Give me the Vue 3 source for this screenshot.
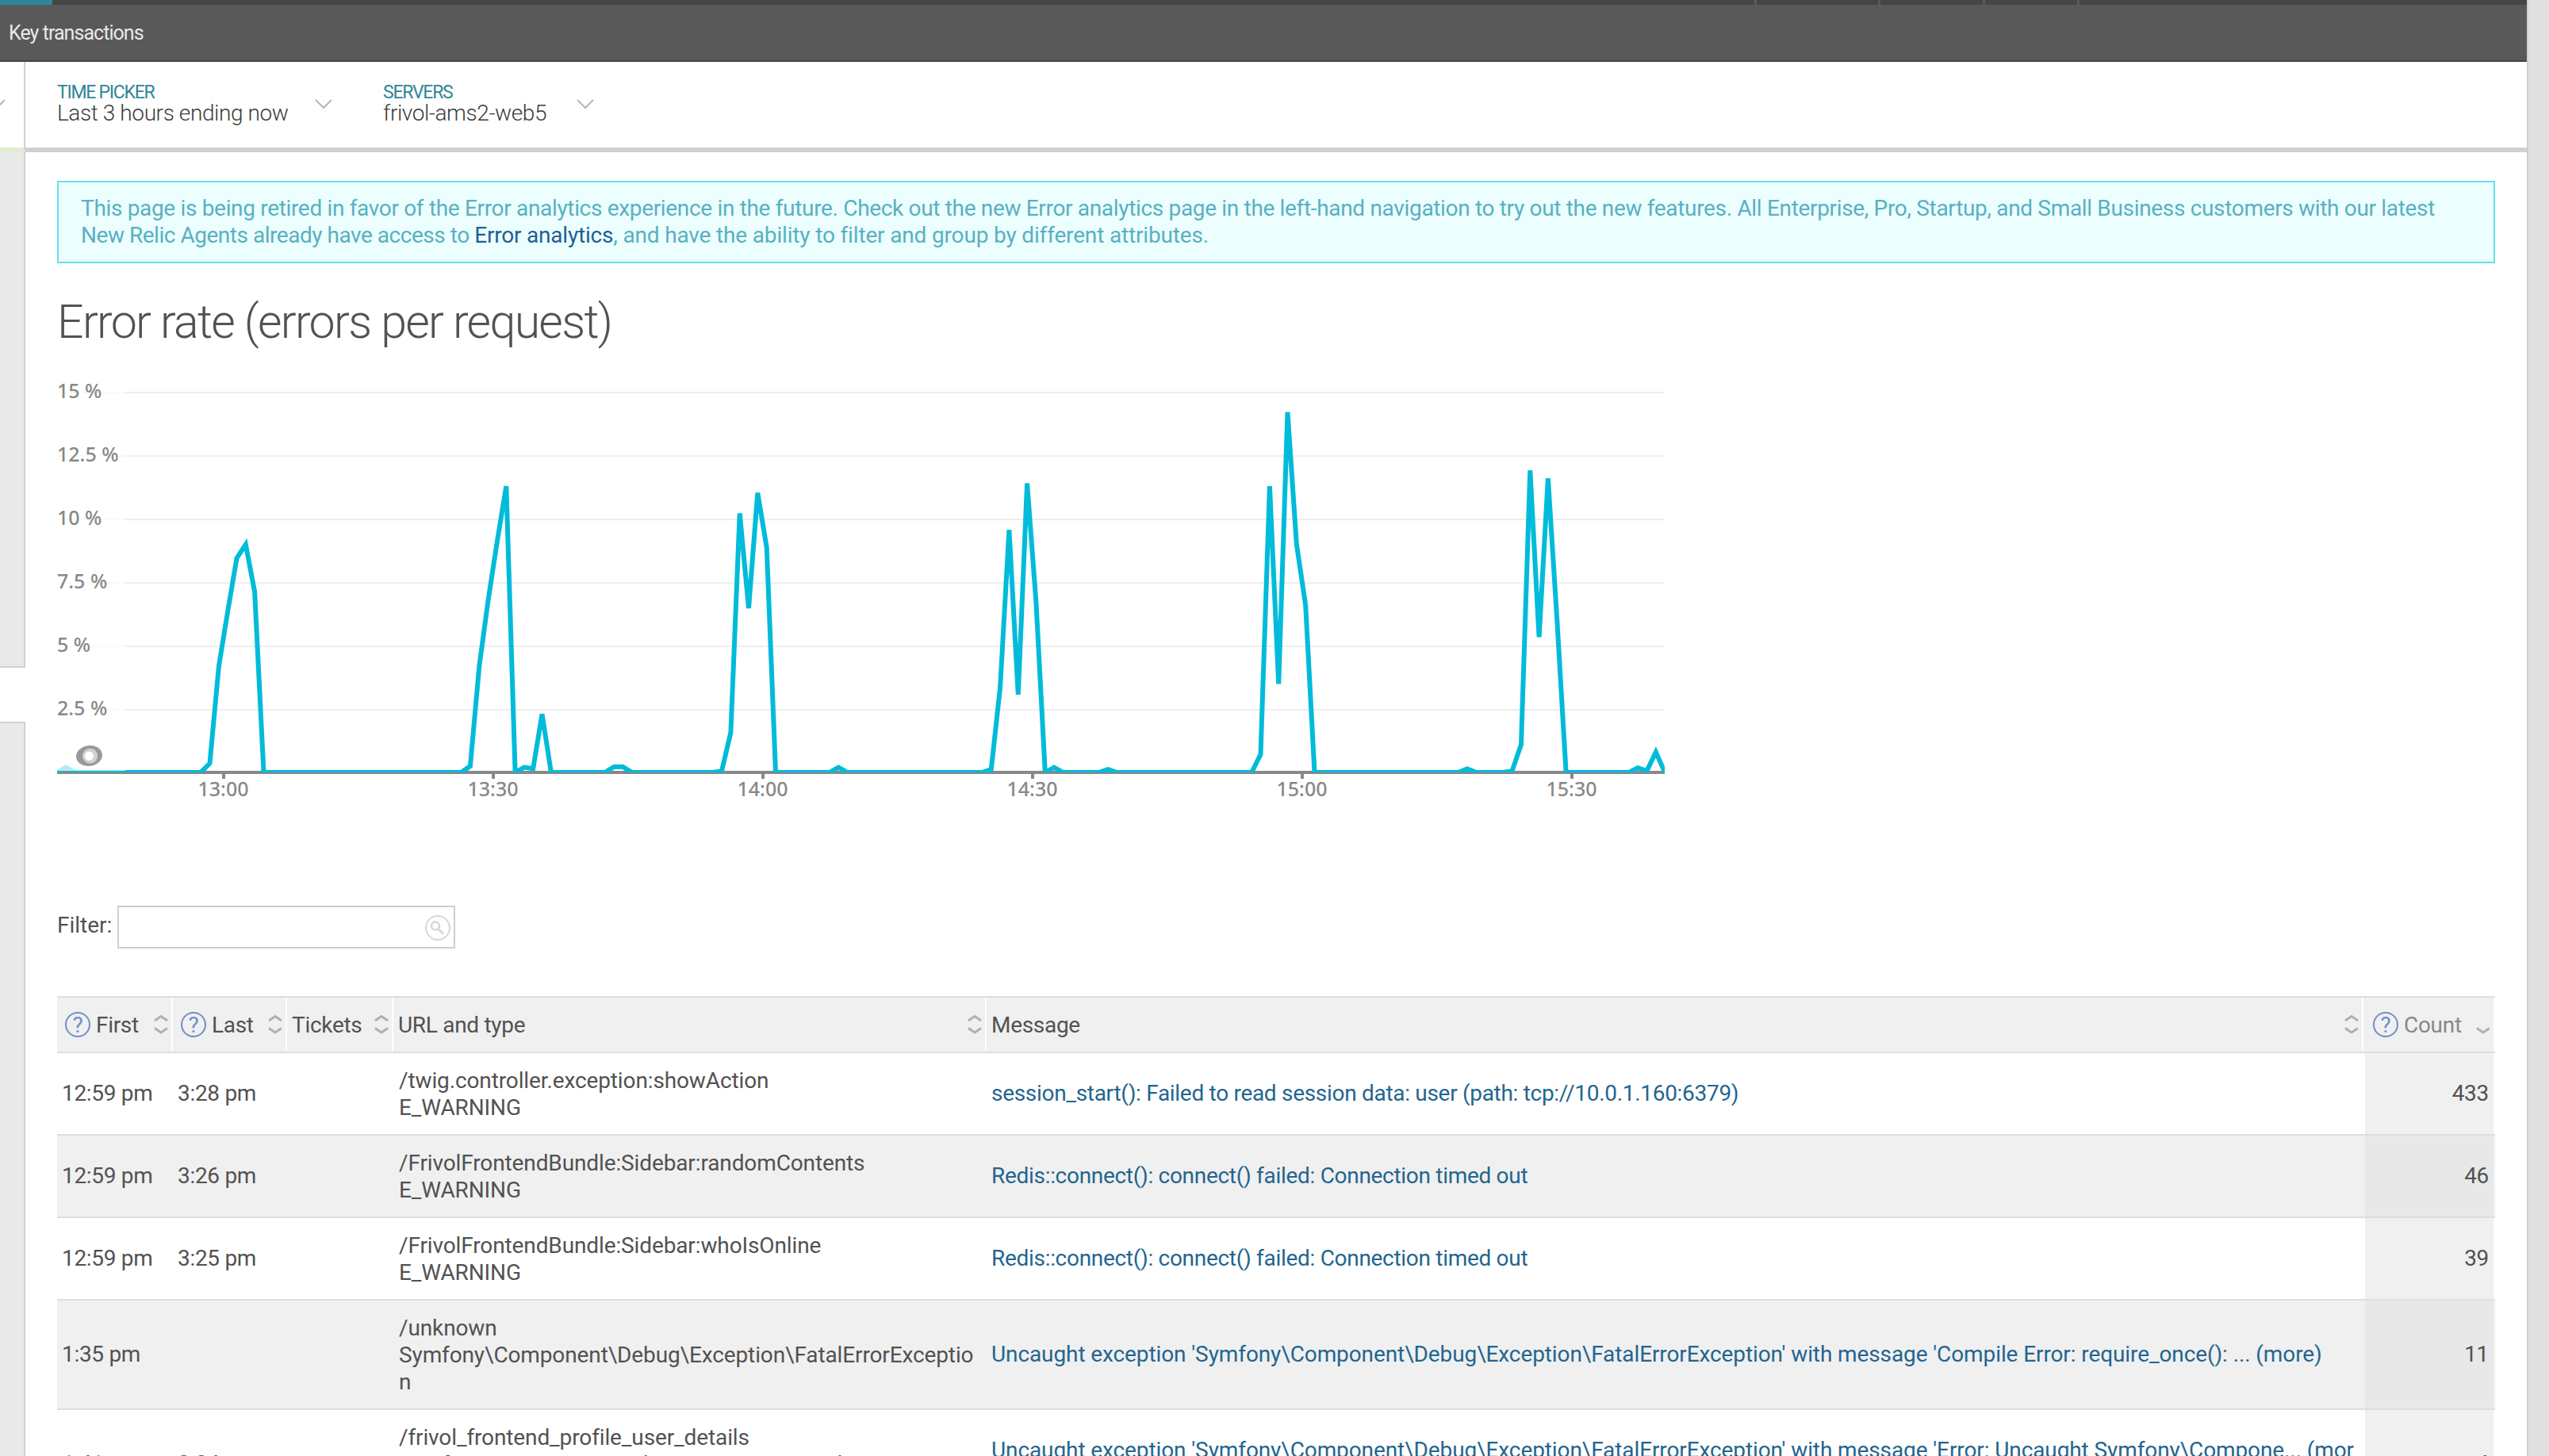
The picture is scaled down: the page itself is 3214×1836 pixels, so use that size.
<template>
  <div class="page">
    <div class="shell">
      <!-- top navigation -->
      <div class="topnav">
        <i class="current"></i>
        <i v-for="w in tabs" :key="w" class="tab" :style="{ width: w + 'px' }"></i>
      </div>
      <div class="subnav">Key transactions</div>

      <div class="context">
        <div class="context-left">
          <svg width="8" height="12" viewBox="0 0 8 12">
            <path d="M-14 1L-4 11L6 1" class="chevron" />
          </svg>
        </div>
        <div class="picker" v-for="p in pickers" :key="p.label">
          <div class="picker-text" :style="{ width: p.width + 'px' }">
            <div class="picker-label">{{ p.label }}</div>
            <div class="picker-value">{{ p.value }}</div>
          </div>
          <svg width="22" height="12" viewBox="0 0 22 12">
            <path d="M1 1L11 11L21 1" class="chevron" />
          </svg>
        </div>
      </div>

      <div class="body">
        <div class="sidebar">
          <div class="side-top"></div>
          <div class="side-active"></div>
          <div class="side-rest"></div>
        </div>

        <div class="content">
          <div class="notice">
            This page is being retired in favor of the Error analytics experience in the future. Check out the new
            Error analytics page in the left-hand navigation to try out the new features. All Enterprise, Pro, Startup,
            and Small Business customers with our latest<br />
            <span class="tight">New Relic Agents already have access to </span><a>Error analytics</a
            ><span class="loose">, and have the ability to filter and group by different attributes.</span>
          </div>

          <h1>Error rate (errors per request)</h1>

          <!-- chart -->
          <svg class="chart" width="2040" height="560" viewBox="72 450 2040 560">
            <defs>
              <clipPath id="plot"><rect x="72" y="450" width="2027" height="524" /></clipPath>
            </defs>
            <rect v-for="g in grid" :key="g" x="72" :y="yOf(g)" width="2027" height="2" fill="#eeeeee" />
            <rect x="72" y="972" width="2027" height="4" fill="#888888" />
            <rect v-for="t in ticks" :key="t.label" :x="t.x - 2" y="976" width="4" height="6" fill="#888888" />
            <polyline :points="line" class="line" clip-path="url(#plot)" />
            <rect x="72" y="450" width="86" height="522" fill="#ffffff" fill-opacity="0.7" />
            <text v-for="g in grid" :key="'l' + g" x="72" :y="yOf(g) + 8" class="axis">{{ g }} %</text>
            <text v-for="t in ticks" :key="'t' + t.label" :x="t.x - 0.5" y="1004" text-anchor="middle" class="axis">
              {{ t.label }}
            </text>
            <ellipse cx="112.5" cy="953" rx="16.5" ry="13" fill="#999999" transform="rotate(-8 112.5 953)" />
            <circle cx="113.6" cy="953.3" r="9.5" fill="#d2d2d2" />
            <circle cx="112.4" cy="953.3" r="5.6" fill="#ffffff" />
          </svg>

          <div class="filter">
            <label>Filter:</label>
            <div class="filter-box">
              <svg width="32" height="32" viewBox="0 0 32 32" fill="none" stroke="#d6d6d6">
                <circle cx="16" cy="16" r="15" stroke-width="2" />
                <circle cx="13" cy="13.5" r="5" stroke-width="2.4" />
                <path d="M16.5 17.5L23 23.5" stroke-width="2.8" />
              </svg>
            </div>
          </div>

          <!-- error table -->
          <div class="table">
            <div class="row head">
              <div class="cell" v-for="c in columns" :key="c.name" :class="{ sorted: c.sorted, plain: !c.help }">
                <svg v-if="c.help" class="help" width="32" height="32" viewBox="0 0 32 32">
                  <circle cx="16" cy="16" r="15" />
                  <text x="16" y="26" text-anchor="middle">?</text>
                </svg>
                <span>{{ c.name }}</span>
                <svg class="sort" width="18" height="26" viewBox="0 0 18 26">
                  <path v-if="!c.sorted" d="M1 8L9 2.5L17 8" />
                  <path d="M1 17.5L9 23L17 17.5" />
                </svg>
              </div>
            </div>
            <div class="row" v-for="(r, i) in rows" :key="i" :class="{ odd: i % 2 }">
              <div class="cell">{{ r.first }}</div>
              <div class="cell">{{ r.last }}</div>
              <div class="cell"></div>
              <div class="cell url">
                <div>{{ r.url }}<br />{{ r.type }}</div>
              </div>
              <div class="cell message" :class="{ long: r.type === fatal }"><a>{{ r.message }}</a></div>
              <div class="cell count">{{ r.count }}</div>
            </div>
          </div>
        </div>
      </div>
    </div>
    <div class="gutter"></div>
  </div>
</template>

<script setup>
import { computed } from "vue";

const tabs = [156, 132, 122]

const pickers = [
  { label: "TIME PICKER", value: "Last 3 hours ending now", width: 325 },
  { label: "SERVERS", value: "frivol-ams2-web5", width: 244 },
]

// chart data: minute -> error rate, everything else is zero
const grid = [15, 12.5, 10, 7.5, 5, 2.5]
const rates = {
  1: 0.2,
  17: 0.36, 18: 4.18, 19: 6.35, 20: 8.44, 21: 8.98, 22: 7.12,
  46: 0.25, 47: 4.18, 48: 6.8, 49: 9.1, 50: 11.28, 52: 0.2, 53: 0.15, 54: 2.3,
  62: 0.22, 63: 0.22,
  74: 0.06, 75: 1.57, 76: 10.21, 77: 6.47, 78: 11.02, 79: 8.87, 87: 0.2,
  104: 0.12, 105: 3.35, 106: 9.56, 107: 3.07, 108: 11.39, 109: 6.7, 111: 0.2, 117: 0.12,
  134: 0.71, 135: 11.28, 136: 3.49, 137: 14.2, 138: 9, 139: 6.58, 157: 0.14,
  162: 0.06, 163: 1.1, 164: 11.9, 165: 5.33, 166: 11.59, 167: 5.98,
  176: 0.18, 177: 0.06, 178: 0.8,
}
const ticks = ["13:00", "13:30", "14:00", "14:30", "15:00", "15:30"].map((label, i) => ({
  label,
  x: 282 + i * 340,
}))

function yOf(v) {
  return 974 - v * 32
}
const line = computed(() => {
  let pts = []
  for (let i = 0; i < 180; i++) {
    pts.push((72 + i * 11.325).toFixed(1) + "," + yOf(rates[i] || 0).toFixed(1))
  }
  return pts.join(" ")
})

const columns = [
  { name: "First", help: true },
  { name: "Last", help: true },
  { name: "Tickets" },
  { name: "URL and type" },
  { name: "Message" },
  { name: "Count", help: true, sorted: true },
]
const fatal = "Symfony\\Component\\Debug\\Exception\\FatalErrorException"
const rows = [
  {
    first: "12:59 pm", last: "3:28 pm", url: "/twig.controller.exception:showAction", type: "E_WARNING",
    message: "session_start(): Failed to read session data: user (path: tcp://10.0.1.160:6379)", count: 433,
  },
  {
    first: "12:59 pm", last: "3:26 pm", url: "/FrivolFrontendBundle:Sidebar:randomContents", type: "E_WARNING",
    message: "Redis::connect(): connect() failed: Connection timed out", count: 46,
  },
  {
    first: "12:59 pm", last: "3:25 pm", url: "/FrivolFrontendBundle:Sidebar:whoIsOnline", type: "E_WARNING",
    message: "Redis::connect(): connect() failed: Connection timed out", count: 39,
  },
  {
    first: "1:35 pm", last: "", url: "/unknown", type: fatal,
    message: `Uncaught exception '${fatal}' with message 'Compile Error: require_once(): ... (more)`, count: 11,
  },
  {
    first: "1:41 pm", last: "3:34 pm", url: "/frivol_frontend_profile_user_details", type: fatal,
    message: `Uncaught exception '${fatal}' with message 'Error: Uncaught Symfony\\Compone... (mor\ne)`, count: 4,
  },
]
</script>

<style>
body {
  background: #ffffff;
}
</style>

<style scoped>
.page {
  display: flex;
  height: 1836px;
  overflow: hidden;
  font-family: Roboto, "Liberation Sans", sans-serif;
  font-size: 28px;
  line-height: 34px;
  letter-spacing: -0.3px;
  color: #525252;
}
.shell {
  width: 3186px;
  height: 1836px;
  overflow: hidden;
}
.gutter {
  flex: 1;
  border-left: 2px solid #cfcfcf;
  background: #e0e0e0;
}
.topnav {
  display: flex;
  height: 6px;
  background: #454545;
}
.current {
  width: 66px;
  margin-right: 2146px;
  background: #2f8598;
}
.tab {
  box-sizing: border-box;
  border-left: 3px solid #595959;
}
.tab:last-child {
  border-right: 3px solid #595959;
}
.subnav {
  box-sizing: border-box;
  height: 72px;
  padding: 8px 0 0 11px;
  border-bottom: 2px solid #444444;
  background: #595959;
  color: #e9e9e9;
  font-size: 25px;
  line-height: 56px;
  letter-spacing: -0.95px;
}
.context {
  display: flex;
  height: 108px;
  border-bottom: 6px solid #d0d0d0;
}
.context-left {
  box-sizing: border-box;
  width: 32px;
  height: 114px;
  margin-right: 40px;
  padding-top: 47px;
  border-right: 2px solid #d0d0d0;
  border-bottom: 6px solid #e0ebd3;
}
.context-left svg {
  display: block;
}
.chevron {
  fill: none;
  stroke: #b4b4b4;
  stroke-width: 2;
}
.picker {
  display: flex;
  padding-top: 26px;
  margin-right: 64px;
}
.picker svg {
  margin-top: 21px;
}
.picker-text {
  white-space: nowrap;
}
.picker-label {
  color: #2f8598;
  font-size: 23px;
  line-height: 26px;
  letter-spacing: -1.25px;
}
.picker-value {
  font-weight: 300;
  line-height: 26px;
  letter-spacing: -0.4px;
  color: #3c3c3c;
}
.body {
  display: flex;
}
.sidebar {
  width: 32px;
}
.side-top,
.side-rest {
  box-sizing: border-box;
  border-right: 2px solid #d0d0d0;
  background: #e9e9e9;
}
.side-top {
  height: 650px;
  border-bottom: 2px solid #d0d0d0;
}
.side-active {
  height: 68px;
}
.side-rest {
  height: 926px;
  border-top: 2px solid #d0d0d0;
}
.content {
  width: 3074px;
  padding: 36px 40px 0;
}
.notice {
  box-sizing: border-box;
  height: 104px;
  padding: 16px 28px 0;
  border: 2px solid #66dfee;
  background: #ecfefe;
  color: #58b1c2;
  letter-spacing: -0.33px;
}
.notice a {
  color: #1f5f92;
  letter-spacing: -0.2px;
}
.tight {
  letter-spacing: -0.47px;
}
.loose {
  letter-spacing: -0.16px;
}
h1 {
  margin: 44px 0 0;
  font-size: 59px;
  font-weight: 300;
  line-height: 60px;
  letter-spacing: -1.68px;
}
.chart {
  display: block;
  margin-top: 14px;
}
.line {
  fill: none;
  stroke: #00bbd9;
  stroke-width: 6;
}
.axis {
  font-family: "Noto Sans", "Open Sans", sans-serif;
  font-size: 25px;
  font-weight: 500;
  letter-spacing: 0;
  fill: #888888;
}
.filter {
  display: flex;
  height: 54px;
  margin-top: 132px;
}
.filter label {
  width: 76px;
  padding-top: 8px;
  letter-spacing: 0;
}
.filter-box {
  box-sizing: border-box;
  display: flex;
  justify-content: flex-end;
  width: 426px;
  padding: 10px 4px 0 0;
  border: 2px solid #cfcfcf;
}
.table {
  margin-top: 60px;
}
.row {
  display: grid;
  grid-template-columns: 146px 144px 134px 748px 1736px 166px;
  border-bottom: 2px solid #dedede;
}
.row.odd {
  background: #f0f0f0;
}
.cell {
  display: flex;
  align-items: center;
  padding: 17px 6px;
  border-right: 2px solid transparent;
}
.head {
  height: 68px;
  border-top: 2px solid #dedede;
}
.head .cell {
  padding: 0 4px 0 10px;
  border-right-color: #ffffff;
  background: #f0f0f0;
}
.head span {
  padding-top: 1px;
}
.head .plain {
  padding-left: 6px;
}
.head .sorted {
  padding-left: 12px;
  color: #888888;
}
.help {
  margin-right: 7px;
}
.help circle {
  fill: none;
  stroke: #6f8fc8;
  stroke-width: 2;
}
.help text {
  font-size: 28px;
  letter-spacing: 0;
  fill: #6f8fc8;
}
.sort {
  margin-left: auto;
  fill: none;
  stroke: #b0b0b0;
  stroke-width: 3;
}
.url {
  padding: 18px 6px 16px 7px;
  word-break: break-all;
  letter-spacing: -0.12px;
}
.message {
  white-space: pre-line;
}
.message.long {
  letter-spacing: -0.1px;
}
.message a {
  color: #24658f;
}
.count {
  justify-content: flex-end;
  border-left: 2px solid transparent;
  background: #f0f0f0;
  background-clip: padding-box;
}
.odd .count {
  background-color: #e8e8e8;
}
</style>
